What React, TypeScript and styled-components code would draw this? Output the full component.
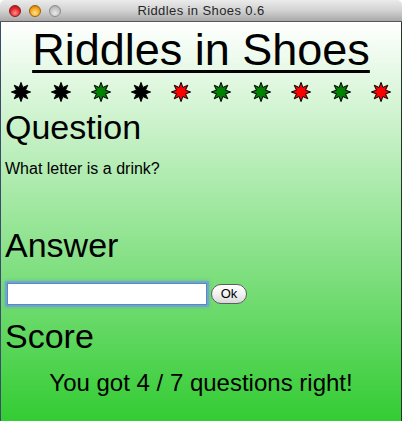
import React from "react";
import styled, { createGlobalStyle } from "styled-components";

const GlobalStyle = createGlobalStyle`
  html, body {
    margin: 0;
    padding: 0;
    background: #fff;
  }
`;

const Window = styled.div`
  width: 402px;
  height: 421px;
  display: flex;
  flex-direction: column;
  border-radius: 5px 5px 0 0;
  overflow: hidden;
  font-family: "Liberation Sans", Arial, sans-serif;
`;

const TitleBar = styled.div`
  height: 21px;
  border-bottom: 1px solid #575757;
  background: linear-gradient(#ebebeb, #d2d2d2 50%, #a9a9a9);
  display: flex;
  align-items: center;
  position: relative;
`;

const Lights = styled.div`
  display: flex;
  gap: 8px;
  margin-left: 9px;
`;

const Light = styled.span<{ $tone: "red" | "amber" | "off" }>`
  width: 12px;
  height: 12px;
  border-radius: 50%;
  box-sizing: border-box;
  border: 1px solid
    ${(p) => (p.$tone === "red" ? "#8a1a1a" : p.$tone === "amber" ? "#9a5d0a" : "#8c8c8c")};
  background: ${(p) =>
    p.$tone === "red"
      ? "radial-gradient(circle at 50% 70%, #ff8f8f, #e3262b 55%, #a50d12)"
      : p.$tone === "amber"
      ? "radial-gradient(circle at 50% 70%, #ffe38a, #f6a623 55%, #b86a08)"
      : "radial-gradient(circle at 50% 70%, #e8e8e8, #c4c4c4 55%, #9c9c9c)"};
`;

const WindowTitle = styled.span`
  position: absolute;
  left: 0;
  right: 0;
  text-align: center;
  font-size: 13px;
  letter-spacing: 0.4px;
  color: #262626;
  line-height: 21px;
`;

const Content = styled.main`
  flex: 1;
  border-left: 1px solid #3b4b6b;
  border-right: 1px solid #25352a;
  background: linear-gradient(#ffffff, #33cc33);
  color: #000;
  display: flex;
  flex-direction: column;
`;

const Banner = styled.h1`
  margin: 3px 0 0;
  font-size: 45px;
  font-weight: normal;
  line-height: 50px;
  text-align: center;
  text-decoration: underline;
  text-decoration-thickness: 3px;
  text-underline-offset: 5px;
`;

const StarRow = styled.div`
  display: flex;
  height: 34px;
  align-items: center;
`;

const StarCell = styled.div`
  width: 40px;
  display: flex;
  justify-content: center;
`;

const Heading = styled.h2<{ $gap: number }>`
  margin: ${(p) => p.$gap}px 0 0 4px;
  font-size: 34px;
  font-weight: normal;
  line-height: 36px;
`;

const Para = styled.p`
  margin: 14px 0 0 4px;
  font-size: 16px;
  line-height: 20px;
`;

const AnswerRow = styled.div`
  margin: 20px 0 0 6px;
  display: flex;
  align-items: center;
  gap: 4px;
`;

const AnswerInput = styled.input`
  width: 200px;
  height: 22px;
  box-sizing: border-box;
  border: 1px solid #5b87c2;
  background: #fff;
  box-shadow: 0 0 0 2px rgba(112, 160, 222, 0.75), 0 0 3px 2px rgba(90, 140, 210, 0.5);
  outline: none;
  padding: 0 3px;
  font-size: 13px;
`;

const OkButton = styled.button`
  width: 36px;
  height: 20px;
  box-sizing: border-box;
  border: 1px solid #5e5e5e;
  border-radius: 10px;
  background: linear-gradient(#ffffff, #f2f2f2 50%, #d9d9d9);
  font-family: "Liberation Sans", Arial, sans-serif;
  font-size: 13px;
  color: #000;
  padding: 0;
  line-height: 18px;
`;

const ScoreLine = styled.p`
  margin: 15px 0 0;
  font-size: 24px;
  line-height: 28px;
  text-align: center;
`;

const Star = ({ color }: { color: string }) => {
  const pts: string[] = [];
  for (let i = 0; i < 16; i++) {
    const r = i % 2 === 0 ? 9.6 : 4.9;
    const a = -Math.PI / 2 + (i * Math.PI) / 8;
    pts.push(`${(10 + r * Math.cos(a)).toFixed(2)},${(10 + r * Math.sin(a)).toFixed(2)}`);
  }
  return (
    <svg width="20" height="20" viewBox="0 0 20 20">
      <polygon points={pts.join(" ")} fill={color} stroke="#000" strokeWidth="1" strokeLinejoin="miter" />
    </svg>
  );
};

const results = ["#000", "#000", "#008000", "#000", "#ff0000", "#008000", "#008000", "#ff0000", "#008000", "#ff0000"];

const App = () => {
  return (
    <Window>
      <GlobalStyle />
      <TitleBar>
        <Lights>
          <Light $tone="red" />
          <Light $tone="amber" />
          <Light $tone="off" />
        </Lights>
        <WindowTitle>Riddles in Shoes 0.6</WindowTitle>
      </TitleBar>
      <Content>
        <Banner>Riddles in Shoes</Banner>
        <StarRow>
          {results.map((c, i) => (
            <StarCell key={i}>
              <Star color={c} />
            </StarCell>
          ))}
        </StarRow>
        <Heading $gap={0}>Question</Heading>
        <Para>What letter is a drink?</Para>
        <Heading $gap={48}>Answer</Heading>
        <AnswerRow>
          <AnswerInput type="text" />
          <OkButton>Ok</OkButton>
        </AnswerRow>
        <Heading $gap={13}>Score</Heading>
        <ScoreLine>You got 4 / 7 questions right!</ScoreLine>
      </Content>
    </Window>
  );
};

export default App;
